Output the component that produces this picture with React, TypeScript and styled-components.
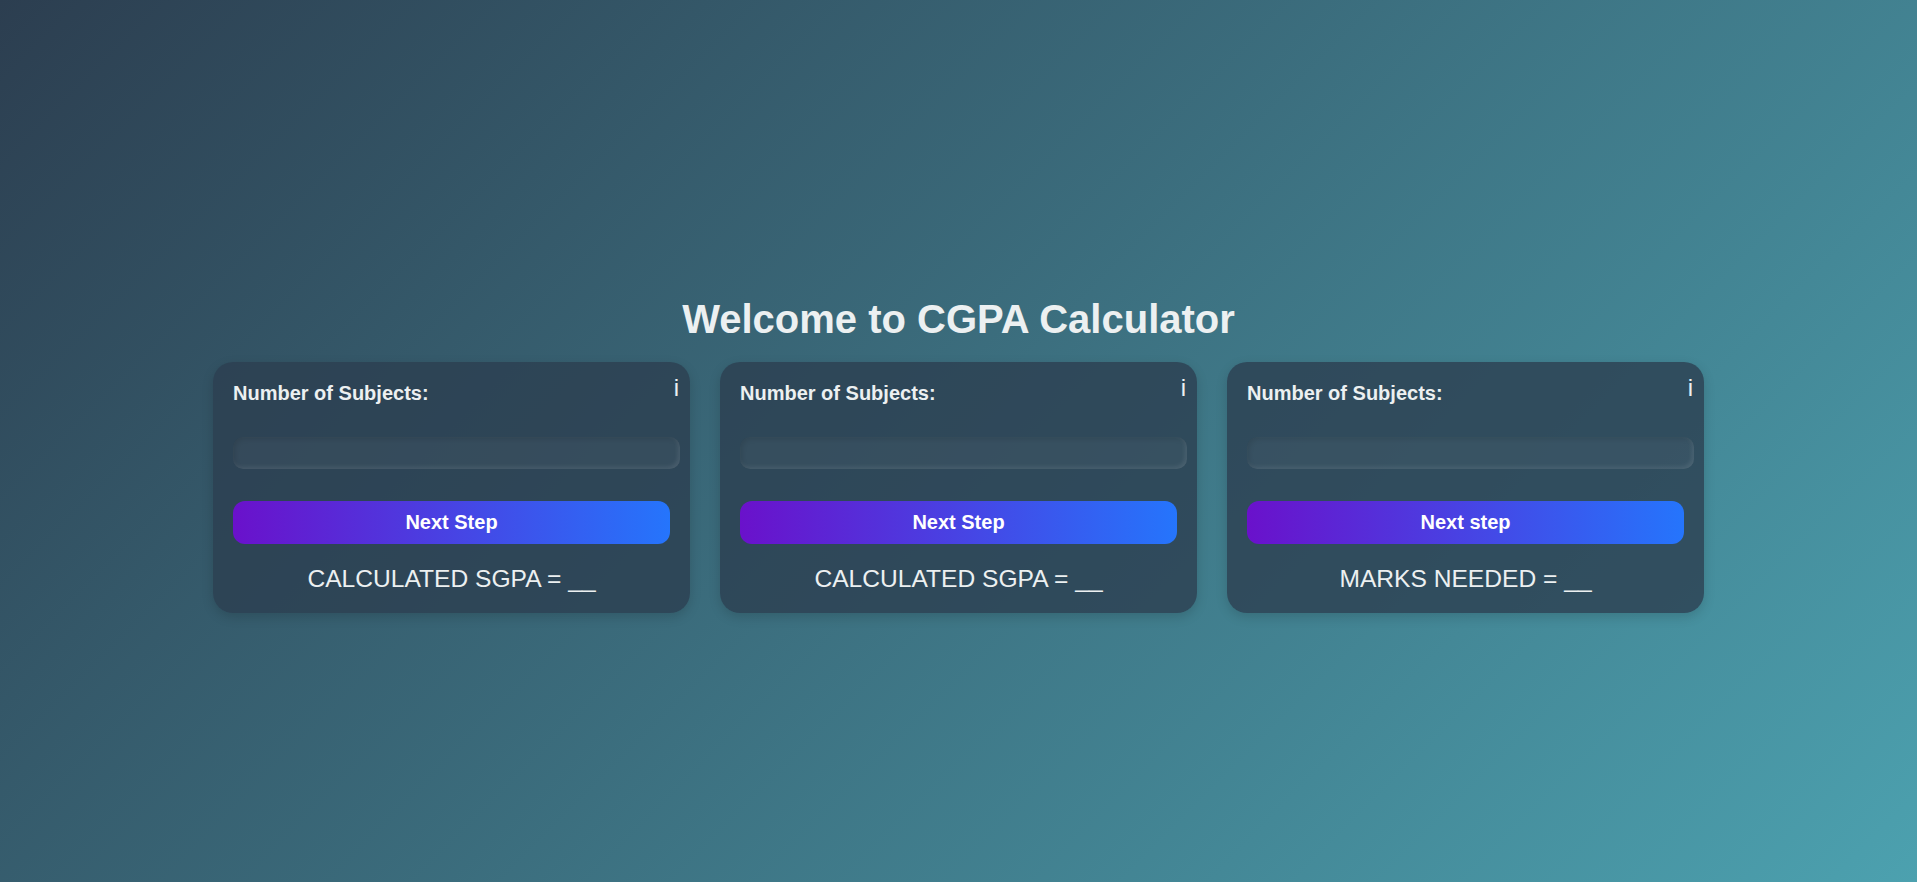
import React from 'react';
import styled, { createGlobalStyle } from 'styled-components';

const GlobalStyle = createGlobalStyle`
  html, body {
    margin: 0;
    padding: 0;
    height: 100%;
  }
  body {
    font-family: 'Liberation Sans', Arial, sans-serif;
    background: linear-gradient(135deg, #2c3e50, #4ca1af);
    color: #ecf0f1;
  }
  #root {
    min-height: 100vh;
  }
`;

const Page = styled.main`
  min-height: 100vh;
  box-sizing: border-box;
  padding-top: 28px;
  display: flex;
  flex-direction: column;
  align-items: center;
  justify-content: center;
`;

const Title = styled.h1`
  margin: 0 0 20px;
  font-size: 40px;
  font-weight: 700;
  color: #ecf0f1;
`;

const Cards = styled.div`
  display: flex;
  gap: 30px;
`;

const Card = styled.section`
  position: relative;
  box-sizing: border-box;
  width: 477px;
  padding: 20px;
  border-radius: 20px;
  background: rgba(44, 62, 80, 0.8);
  box-shadow: 0 4px 12px rgba(0, 0, 0, 0.15);
  display: flex;
  flex-direction: column;
`;

const Label = styled.label`
  font-size: 20px;
  font-weight: 700;
  color: #ecf0f1;
`;

const InfoIcon = styled.span`
  position: absolute;
  top: 12px;
  right: 11px;
  font-size: 24px;
  color: #ecf0f1;
  cursor: pointer;
`;

const Input = styled.input`
  box-sizing: border-box;
  width: 447px;
  height: 32px;
  margin-top: 32px;
  border: none;
  border-radius: 10px;
  background: rgba(255, 255, 255, 0.04);
  box-shadow: inset 2px 2px 5px rgba(0, 0, 0, 0.1),
    inset -2px -2px 4px rgba(255, 255, 255, 0.1);
  color: #ecf0f1;
  font-size: 16px;
  padding: 0 12px;
  outline: none;
`;

const Button = styled.button`
  height: 43px;
  margin-top: 32px;
  border: none;
  border-radius: 12px;
  background: linear-gradient(to right, #6a11cb, #2575fc);
  color: #fff;
  font-family: 'Liberation Sans', Arial, sans-serif;
  font-size: 20px;
  font-weight: 700;
  cursor: pointer;
`;

const Result = styled.p`
  margin: 21px 0 0;
  text-align: center;
  font-size: 24.6px;
  color: #ecf0f1;
`;

type CalcCardProps = {
  buttonLabel: string;
  resultLabel: string;
};

const CalcCard: React.FC<CalcCardProps> = ({ buttonLabel, resultLabel }) => (
  <Card>
    <InfoIcon>i</InfoIcon>
    <Label>Number of Subjects:</Label>
    <Input type="number" />
    <Button>{buttonLabel}</Button>
    <Result>{resultLabel} = __</Result>
  </Card>
);

const App: React.FC = () => (
  <>
    <GlobalStyle />
    <Page>
      <Title>Welcome to CGPA Calculator</Title>
      <Cards>
        <CalcCard buttonLabel="Next Step" resultLabel="CALCULATED SGPA" />
        <CalcCard buttonLabel="Next Step" resultLabel="CALCULATED SGPA" />
        <CalcCard buttonLabel="Next step" resultLabel="MARKS NEEDED" />
      </Cards>
    </Page>
  </>
);

export default App;
